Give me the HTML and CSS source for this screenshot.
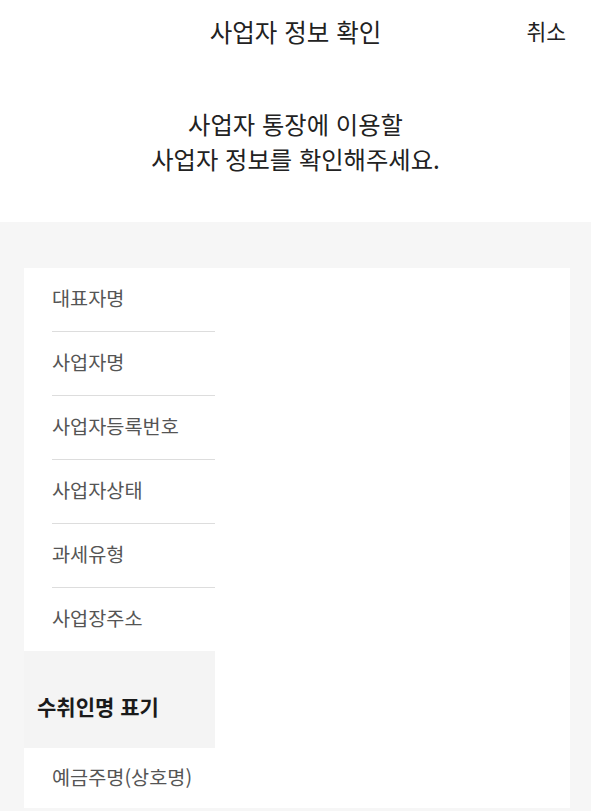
FILE: index.html
```html
<!DOCTYPE html>
<html lang="ko">

<head>
    <meta charset="UTF-8">
    <meta name="viewport" content="width=device-width, initial-scale=1.0">
    <title>사업자 정보 확인</title>
    <link rel="stylesheet" href="styles.css">
</head>

<body>
    <div class="header">
        <h1 class="header_title">사업자 정보 확인</h1>
        <a href="javascript:;" class="header_cancel">취소</a>
    </div>

    <div class="intro">
        사업자 통장에 이용할<br>
        사업자 정보를 확인해주세요.
    </div>

    <div class="content">
        <div class="card">
            <div class="card_left">
                <ul class="info_list">
                    <li class="info_item"><span>대표자명</span></li>
                    <li class="info_item"><span>사업자명</span></li>
                    <li class="info_item"><span>사업자등록번호</span></li>
                    <li class="info_item"><span>사업자상태</span></li>
                    <li class="info_item"><span>과세유형</span></li>
                    <li class="info_item"><span>사업장주소</span></li>
                </ul>

                <!-- 수취인명 표기 -->
                <div class="section_title">수취인명 표기</div>

                <ul class="info_list">
                    <li class="info_item last"><span>예금주명(상호명)</span></li>
                </ul>
            </div>
        </div>
    </div>
</body>

</html>
```

FILE: styles.css
```css
* {
    margin: 0;
    padding: 0;
    box-sizing: border-box;
}

ul {
    list-style: none;
}

a {
    color: #222;
    text-decoration: none;
}

body {
    background-color: #fff;
    font-family: "Noto Sans CJK KR", "Noto Sans", sans-serif;
    color: #222;
}

.header {
    position: relative;
    height: 64px;
    display: flex;
    align-items: center;
    justify-content: center;
}

.header_title {
    font-size: 24.5px;
    font-weight: normal;
    line-height: 32px;
}

/* 취소 버튼은 제목 위에 겹쳐 오른쪽에 */
.header_cancel {
    position: absolute;
    right: 25px;
    top: 17px;
    font-size: 21.5px;
    line-height: 28px;
}

.intro {
    padding: 42px 0 46px;
    font-size: 24.3px;
    line-height: 35px;
    text-align: center;
}

.content {
    background-color: #f6f6f6;
    padding: 46px 21px 3px 24px;
}

.card {
    background-color: #fff;
    height: 540px;
}

.card_left {
    width: 191px;
}

.info_item {
    padding-left: 28px;
}

.info_item span {
    display: block;
    height: 64px;
    line-height: 59px;
    font-size: 19.7px;
    color: #555;
    border-bottom: 1px solid #ddd;
}

.info_list .info_item:last-child span {
    height: 63px;
    border-bottom: none;
}

.info_item.last span {
    height: 61px;
    line-height: 58px;
    font-size: 19.7px;
}

.section_title {
    background-color: #f4f4f4;
    height: 97px;
    padding: 41px 0 0 13px;
    font-size: 21px;
    font-weight: bold;
    line-height: 28px;
    color: #1a1a1a;
}
```
